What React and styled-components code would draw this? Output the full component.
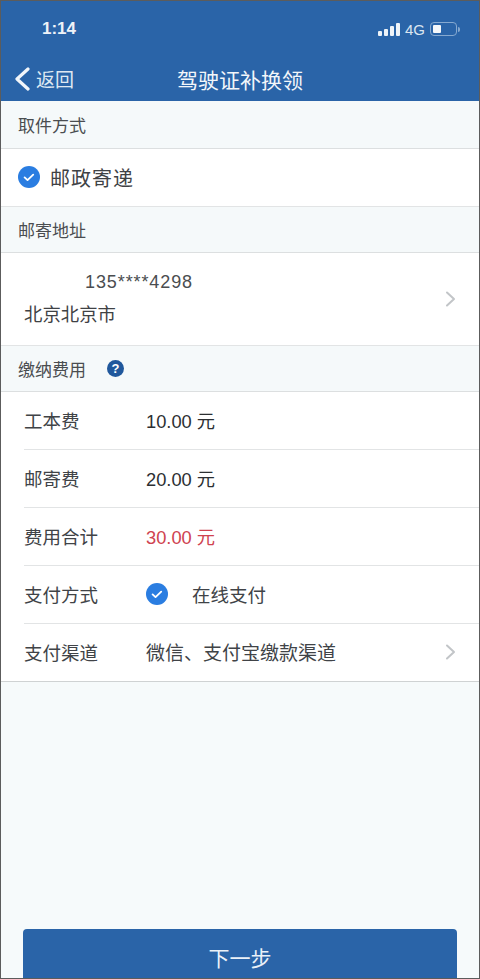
import React from 'react';
import styled, { createGlobalStyle } from 'styled-components';

const GlobalStyle = createGlobalStyle`
  html, body {
    margin: 0;
    padding: 0;
  }
  body {
    font-family: "Liberation Sans", "Noto Sans CJK SC", sans-serif;
  }
`;

const fees = [
  { id: 1, label: '工本费', value: '10.00 元' },
  { id: 2, label: '邮寄费', value: '20.00 元' },
  { id: 3, label: '费用合计', value: '30.00 元', danger: true },
];

const Check = ({ size = 24 }) => (
  <CheckMark width={size} height={size} viewBox="0 0 24 24">
    <circle cx="12" cy="12" r="12" fill="#2a7de1" />
    <path d="M7.2 12.4l3.2 3 6.2-6" fill="none" stroke="#fff" strokeWidth="2" strokeLinecap="round" strokeLinejoin="round" />
  </CheckMark>
);

const Chevron = () => (
  <ChevronMark width="11" height="16" viewBox="0 0 11 16">
    <path d="M2 1.5L9 8l-7 6.5" fill="none" stroke="#c2c5c8" strokeWidth="2" strokeLinecap="round" strokeLinejoin="round" />
  </ChevronMark>
);

const App = () => {
  return (
    <Page>
      <GlobalStyle />
      <Header>
        <StatusBar>
          <Time>1:14</Time>
          <StatusRight>
            <Signal>
              <SignalBar $h={5} />
              <SignalBar $h={7} />
              <SignalBar $h={10} />
              <SignalBar $h={13} />
            </Signal>
            <Network>4G</Network>
            <Battery>
              <BatteryFill />
            </Battery>
            <BatteryTip />
          </StatusRight>
        </StatusBar>
        <NavBar>
          <BackLink>
            <svg width="17" height="24" viewBox="0 0 17 24">
              <path d="M14 2L3 12l11 10" fill="none" stroke="#f2f6fa" strokeWidth="3.2" strokeLinecap="round" strokeLinejoin="round" />
            </svg>
            <BackText>返回</BackText>
          </BackLink>
          <Title>驾驶证补换领</Title>
        </NavBar>
      </Header>

      <SectionTitle $h={48}>取件方式</SectionTitle>
      <PickupRow>
        <Check size={22} />
        <PickupText>邮政寄递</PickupText>
      </PickupRow>

      <SectionTitle $h={46}>邮寄地址</SectionTitle>
      <AddressRow>
        <AddressInfo>
          <Phone>135****4298</Phone>
          <City>北京北京市</City>
        </AddressInfo>
        <Chevron />
      </AddressRow>

      <SectionTitle $h={46}>
        缴纳费用
        <HelpBadge>?</HelpBadge>
      </SectionTitle>
      <FeeList>
        {fees.map(({ id, label, value, danger }) => (
          <FeeRow key={id}>
            <FeeLabel>{label}</FeeLabel>
            <FeeValue $danger={danger}>{value}</FeeValue>
          </FeeRow>
        ))}
        <FeeRow>
          <FeeLabel>支付方式</FeeLabel>
          <Check size={22} />
          <PayText>在线支付</PayText>
        </FeeRow>
        <FeeRow>
          <FeeLabel>支付渠道</FeeLabel>
          <ChannelText>微信、支付宝缴款渠道</ChannelText>
          <Chevron />
        </FeeRow>
      </FeeList>

      <Footer>
        <NextButton>下一步</NextButton>
      </Footer>
    </Page>
  );
};

const Page = styled.div`
  box-sizing: border-box;
  width: 480px;
  height: 979px;
  overflow: hidden;
  display: flex;
  flex-direction: column;
  background: #f6fafb;
  border: 1px solid #5c5c5c;
`;

const Header = styled.header`
  height: 100px;
  flex: none;
  background: #2a64a8;
  color: #f2f6fa;
`;

const StatusBar = styled.div`
  height: 56px;
  padding: 0 19px 0 41px;
  display: flex;
  align-items: center;
  justify-content: space-between;
`;

const Time = styled.span`
  font-size: 17px;
  font-weight: 700;
  color: #eef3f8;
`;

const StatusRight = styled.div`
  display: flex;
  align-items: center;
`;

const Signal = styled.div`
  display: flex;
  align-items: flex-end;
  gap: 2px;
  height: 13px;
`;

const SignalBar = styled.i`
  display: block;
  width: 4px;
  height: ${(p) => p.$h}px;
  border-radius: 1px;
  background: #eef3f8;
`;

const Network = styled.span`
  margin: 0 5px 0 5px;
  font-size: 15px;
  color: #dbe5f0;
`;

const Battery = styled.div`
  box-sizing: border-box;
  width: 27px;
  height: 14px;
  padding: 2px;
  border: 1px solid #86a9d0;
  border-radius: 4px;
`;

const BatteryFill = styled.div`
  width: 8px;
  height: 100%;
  border-radius: 1px;
  background: #f4f7fa;
`;

const BatteryTip = styled.i`
  display: block;
  width: 2px;
  height: 5px;
  margin-left: 1px;
  border-radius: 0 2px 2px 0;
  background: #86a9d0;
`;

const NavBar = styled.nav`
  position: relative;
  height: 44px;
  display: flex;
  align-items: center;
  justify-content: center;
`;

const BackLink = styled.div`
  position: absolute;
  left: 13px;
  top: 8px;
  display: flex;
  align-items: center;
  gap: 5px;
`;

const BackText = styled.span`
  font-size: 19px;
  color: #dfe8f2;
`;

const Title = styled.h1`
  margin: 0;
  font-size: 21px;
  font-weight: 400;
  color: #f2f6fa;
`;

const SectionTitle = styled.div`
  box-sizing: border-box;
  flex: none;
  height: ${(p) => p.$h}px;
  padding: 0 17px 1px;
  display: flex;
  align-items: center;
  gap: 21px;
  font-size: 17px;
  color: #4a4d50;
  background: #f5f9fa;
  border-bottom: 1px solid #dcdfe0;
`;

const HelpBadge = styled.span`
  width: 17px;
  height: 17px;
  border-radius: 50%;
  display: grid;
  place-items: center;
  font-size: 13px;
  font-weight: 700;
  color: #fff;
  background: #20589c;
`;

const PickupRow = styled.div`
  box-sizing: border-box;
  flex: none;
  height: 58px;
  padding: 0 17px 1px;
  display: flex;
  align-items: center;
  gap: 10px;
  background: #fff;
  border-bottom: 1px solid #e2e4e5;
`;

const PickupText = styled.span`
  font-size: 20px;
  letter-spacing: 1px;
  color: #3f4245;
`;

const AddressRow = styled.div`
  box-sizing: border-box;
  flex: none;
  height: 93px;
  padding: 0 23px;
  display: flex;
  align-items: center;
  justify-content: space-between;
  background: #fff;
  border-bottom: 1px solid #e2e4e5;
`;

const AddressInfo = styled.div`
  display: flex;
  flex-direction: column;
  gap: 12px;
`;

const Phone = styled.span`
  padding-left: 61px;
  font-size: 18px;
  letter-spacing: 0.9px;
  line-height: 20px;
  color: #4a4d50;
`;

const City = styled.span`
  font-size: 18.4px;
  line-height: 22px;
  color: #3f4245;
`;

const FeeList = styled.div`
  flex: none;
  padding-left: 23px;
  background: #fff;
  border-bottom: 1px solid #cfd2d3;
`;

const FeeRow = styled.div`
  box-sizing: border-box;
  height: 58px;
  padding: 0 23px 2px 0;
  display: flex;
  align-items: center;
  border-bottom: 1px solid #e2e4e5;
  &:last-child {
    border-bottom: 0;
    height: 57px;
  }
`;

const FeeLabel = styled.span`
  flex: none;
  width: 122px;
  font-size: 18.5px;
  color: #404347;
`;

const FeeValue = styled.span`
  font-size: 18.3px;
  color: ${(p) => (p.$danger ? '#cf4350' : '#2c2f32')};
`;

const PayText = styled.span`
  margin-left: 24px;
  font-size: 18.5px;
  color: #404347;
`;

const ChannelText = styled.span`
  flex: 1;
  font-size: 19px;
  color: #404347;
`;

const CheckMark = styled.svg`
  flex: none;
  display: block;
`;

const ChevronMark = styled.svg`
  flex: none;
  display: block;
`;

const Footer = styled.div`
  flex: 1;
  display: flex;
  align-items: flex-end;
  padding: 0 22px;
`;

const NextButton = styled.button`
  width: 100%;
  height: 49px;
  padding: 6px 0 0;
  border: 0;
  border-radius: 4px 4px 0 0;
  font-family: inherit;
  font-size: 21px;
  color: #eaf1f8;
  background: #2a64a8;
`;

export default App;
